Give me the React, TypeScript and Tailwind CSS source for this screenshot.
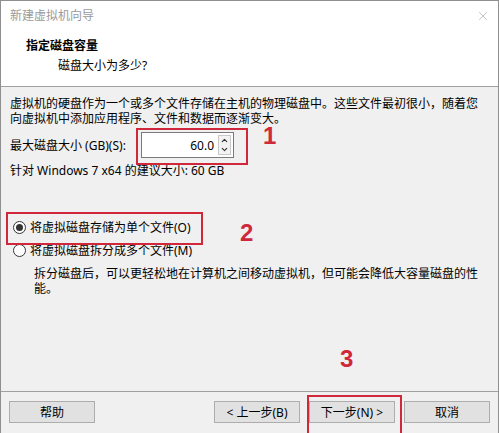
import { ChevronUp, ChevronDown, X } from 'lucide-react'

const font = { fontFamily: '"Noto Sans", "Noto Sans CJK SC", sans-serif' }

function Btn({ label }: { label: string }) {
  return (
    <div className="flex h-[22px] w-[86px] items-center justify-center border border-[#adadad] bg-[#e1e1e1] text-[12px] text-black">
      {label}
    </div>
  )
}

function Radio({ checked, label }: { checked?: boolean; label: string }) {
  return (
    <div className="flex h-[23px] items-center gap-[4px] pl-[12px]">
      <div className="flex h-[13px] w-[13px] items-center justify-center rounded-full border border-[#333] bg-white">
        {checked && <div className="h-[7px] w-[7px] rounded-full bg-[#333]" />}
      </div>
      <span>{label}</span>
    </div>
  )
}

export default function App() {
  return (
    <div
      className="relative h-[433px] w-[499px] overflow-hidden border-x border-t border-[#8f8f8f] bg-[#f0f0f0] text-[12px] leading-[15px] text-black"
      style={font}
    >
      {/* title + header */}
      <div className="bg-white">
        <div className="flex h-[29px] items-center justify-between pl-[9px] pr-[8px]">
          <span className="text-[#9a9a9a]">新建虚拟机向导</span>
          <X className="h-[14px] w-[14px] text-[#999]" strokeWidth={1} />
        </div>
        <div className="h-[57px] border-b border-[#a0a0a0]">
          <div className="pl-[25px] pt-[8px] font-bold">指定磁盘容量</div>
          <div className="pl-[57px] pt-[5px]">磁盘大小为多少?</div>
        </div>
      </div>

      {/* body */}
      <div className="h-[305px] border-b border-[#a0a0a0] pt-[9px]">
        <p className="px-[9px]">
          虚拟机的硬盘作为一个或多个文件存储在主机的物理磁盘中。这些文件最初很小，随着您
          <br />
          向虚拟机中添加应用程序、文件和数据而逐渐变大。
        </p>
        <div className="mt-[6px] flex items-center pl-[9px]">
          <span className="w-[131px]">最大磁盘大小 (GB)(S):</span>
          <div className="flex h-[26px] w-[93px] items-center border border-[#7a7a7a] bg-white">
            <span className="flex-1 pr-[4px] text-right">60.0</span>
            <div className="mr-[2px] flex h-[20px] w-[13px] flex-col border border-[#c8c8c8] bg-[#f3f3f3]">
              <ChevronUp className="h-[9px] w-[11px] text-[#333]" strokeWidth={3} />
              <ChevronDown className="h-[9px] w-[11px] text-[#333]" strokeWidth={3} />
            </div>
          </div>
        </div>
        <p className="mt-[5px] pl-[9px]">针对 Windows 7 x64 的建议大小: 60 GB</p>

        <div className="mt-[38px]">
          <Radio checked label="将虚拟磁盘存储为单个文件(O)" />
          <Radio label="将虚拟磁盘拆分成多个文件(M)" />
          <p className="pl-[33px] pr-[20px] pt-[4px]">
            拆分磁盘后，可以更轻松地在计算机之间移动虚拟机，但可能会降低大容量磁盘的性
            <br />
            能。
          </p>
        </div>
      </div>

      {/* footer */}
      <div className="flex items-center pl-[8px] pr-[8px] pt-[9px]">
        <Btn label="帮助" />
        <div className="flex-1" />
        <div className="flex gap-[9px]">
          <Btn label="< 上一步(B)" />
          <Btn label="下一步(N) >" />
          <Btn label="取消" />
        </div>
      </div>

      {/* annotations */}
      <div className="absolute left-[135px] top-[127px] h-[37px] w-[112px] border-2 border-[#d0283a]" />
      <div className="absolute left-[262px] top-[123px] text-[24px] font-bold leading-[24px] text-[#d0283a]" style={{ fontFamily: '"Liberation Sans", sans-serif' }}>1</div>
      <div className="absolute left-[5px] top-[211px] h-[33px] w-[197px] border-2 border-[#d0283a]" />
      <div className="absolute left-[239px] top-[220px] text-[24px] font-bold leading-[24px] text-[#d0283a]" style={{ fontFamily: '"Liberation Sans", sans-serif' }}>2</div>
      <div className="absolute left-[306px] top-[394px] h-[40px] w-[95px] border-2 border-[#d0283a]" />
      <div className="absolute left-[339px] top-[346px] text-[24px] font-bold leading-[24px] text-[#d0283a]" style={{ fontFamily: '"Liberation Sans", sans-serif' }}>3</div>
    </div>
  )
}
